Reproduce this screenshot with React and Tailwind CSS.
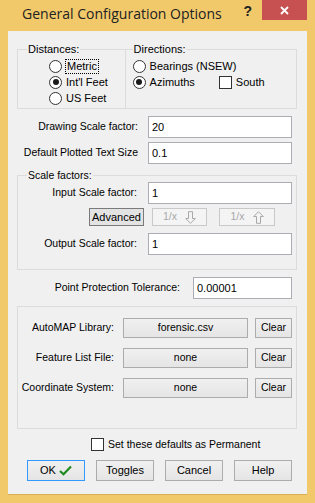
import React from "react";

function Radio({ checked, label, focus }) {
  return (
    <div className="flex items-center h-[16px]">
      <span className="w-[13px] h-[13px] rounded-full border border-[#333333] bg-white flex items-center justify-center shrink-0">
        {checked ? <span className="w-[6px] h-[6px] rounded-full bg-[#1a1a1a]" /> : null}
      </span>
      {focus ? (
        <span className="ml-[3px] px-[1px] leading-[13px] border border-dotted border-black">{label}</span>
      ) : (
        <span className="ml-[4px] leading-[13px]">{label}</span>
      )}
    </div>
  );
}

function Box() {
  return <span className="w-[13px] h-[13px] border border-[#333333] bg-white shrink-0" />;
}

function TextBox({ value, w }) {
  return (
    <div className={`h-[22px] border border-[#ABADB3] bg-white pl-[3px] flex items-center text-[11px] ${w}`}>{value}</div>
  );
}

function Btn({ children, w, h = "h-[20px]", extra = "border-[#ACACAC]" }) {
  return (
    <div className={`${w} ${h} border ${extra} bg-linear-to-b from-[#F0F0F0] to-[#E5E5E5] flex items-center justify-center whitespace-nowrap`}>
      {children}
    </div>
  );
}

function Arrow({ up }) {
  return (
    <svg width="11" height="13" viewBox="0 0 11 13" className="ml-[8px]">
      {up ? (
        <path d="M5.5 0.7 L10.3 5.5 L7.5 5.5 L7.5 12.3 L3.5 12.3 L3.5 5.5 L0.7 5.5 Z" fill="none" stroke="#A8A8A8" strokeWidth="1" />
      ) : (
        <path d="M5.5 12.3 L10.3 7.5 L7.5 7.5 L7.5 0.7 L3.5 0.7 L3.5 7.5 L0.7 7.5 Z" fill="none" stroke="#A8A8A8" strokeWidth="1" />
      )}
    </svg>
  );
}

export default function App() {
  return (
    <div className="w-[315px] h-[503px] bg-[#F1C96B] flex flex-col font-['Liberation_Sans',Arial,sans-serif] text-[10.5px] text-black">
      {/* Title bar */}
      <div className="h-[31px] flex items-start shrink-0">
        <div className="pl-[22px] pt-[4px] text-[14px] leading-[20px] text-[#222222] font-['Open_Sans',sans-serif]">
          General Configuration Options
        </div>
        <div className="flex-1" />
        <div className="pt-[2px] mr-[10px] text-[14px] font-bold leading-[18px] text-[#222222] font-['Liberation_Sans',Arial,sans-serif]">?</div>
        <div className="w-[45px] h-[20px] bg-[#C75050] mr-[8px] flex items-center justify-center">
          <svg width="9" height="9" viewBox="0 0 9 9">
            <path d="M1 1 L8 8 M8 1 L1 8" stroke="white" strokeWidth="1.8" />
          </svg>
        </div>
      </div>

      {/* Client area */}
      <div className="mx-[8px] h-[464px] bg-[#F0F0F0] pl-[9px] pr-[10px] flex flex-col shrink-0 border-b border-[#D9AE55] whitespace-nowrap">
        {/* Distances / Directions */}
        <div className="mt-[12px] flex">
          <fieldset className="w-[109px] h-[66px] border border-[#DCDCDC] px-0 pb-0">
            <legend className="ml-[9px] px-[1px] leading-[13px] text-[11px]">Distances:</legend>
            <div className="pl-[31px] pt-[2px] flex flex-col text-[11px]">
              <Radio label="Metric" focus />
              <Radio label="Int'l Feet" checked />
              <Radio label="US Feet" />
            </div>
          </fieldset>
          <fieldset className="w-[173px] h-[66px] -ml-px border border-[#DCDCDC] px-0 pb-0">
            <legend className="ml-[7px] px-[1px] leading-[13px] text-[11px]">Directions:</legend>
            <div className="pl-[7px] pt-[2px] flex flex-col text-[11px]">
              <Radio label="Bearings (NSEW)" />
              <div className="flex items-center">
                <Radio label="Azimuths" checked />
                <div className="ml-[24px] flex items-center">
                  <Box />
                  <span className="ml-[4px] leading-[13px]">South</span>
                </div>
              </div>
            </div>
          </fieldset>
        </div>

        {/* Drawing scale */}
        <div className="mt-[7px] flex items-center">
          <div className="w-[121px] text-right">Drawing Scale factor:</div>
          <div className="ml-[10px]"><TextBox value="20" w="w-[144px]" /></div>
        </div>
        <div className="mt-[4px] flex items-center">
          <div className="w-[121px] text-right">Default Plotted Text Size</div>
          <div className="ml-[10px]"><TextBox value="0.1" w="w-[144px]" /></div>
        </div>

        {/* Scale factors */}
        <fieldset className="mt-[5px] h-[101px] border border-[#DCDCDC] px-0 pb-0">
          <legend className="ml-[9px] px-[1px] leading-[13px]">Scale factors:</legend>
          <div className="flex items-center">
            <div className="w-[119px] text-right">Input Scale factor:</div>
            <div className="ml-[11px]"><TextBox value="1" w="w-[144px]" /></div>
          </div>
          <div className="mt-[4px] flex items-center">
            <div className="ml-[71px] w-[55px] h-[18px] border border-[#7A7A7A] bg-[#E3E3E3] flex items-center justify-center text-[11px]">Advanced</div>
            <div className="ml-[8px] w-[55px] h-[18px] border border-[#C9C9C9] bg-[#F4F4F4] flex items-center justify-center text-[#A8A8A8]">
              <span>1/x</span>
              <Arrow />
            </div>
            <div className="ml-[12px] w-[56px] h-[18px] border border-[#C9C9C9] bg-[#F4F4F4] flex items-center justify-center text-[#A8A8A8]">
              <span>1/x</span>
              <Arrow up />
            </div>
          </div>
          <div className="mt-[7px] flex items-center">
            <div className="w-[119px] text-right">Output Scale factor:</div>
            <div className="ml-[11px]"><TextBox value="1" w="w-[144px]" /></div>
          </div>
        </fieldset>

        {/* Point protection */}
        <div className="mt-[7px] flex items-center">
          <div className="w-[163px] text-right">Point Protection Tolerance:</div>
          <div className="ml-[13px]"><TextBox value="0.00001" w="w-[99px]" /></div>
        </div>

        {/* Files */}
        <div className="mt-[7px] h-[123px] border border-[#DCDCDC] flex flex-col">
          {[
            ["AutoMAP Library:", "forensic.csv", "mt-[11px]"],
            ["Feature List File:", "none", "mt-[10px]"],
            ["Coordinate System:", "none", "mt-[10px]"],
          ].map(([l, v, m]) => (
            <div key={l} className={`${m} flex items-center`}>
              <div className="w-[96px] text-right">{l}</div>
              <div className="ml-[9px]"><Btn w="w-[125px]">{v}</Btn></div>
              <div className="ml-[7px]"><Btn w="w-[37px]">Clear</Btn></div>
            </div>
          ))}
        </div>

        {/* Permanent */}
        <div className="mt-[9px] flex items-center">
          <div className="ml-[74px] flex"><Box /></div>
          <span className="ml-[4px] leading-[13px]">Set these defaults as Permanent</span>
        </div>

        {/* Buttons */}
        <div className="mt-[9px] ml-[10px] flex gap-[11px] text-[11px]">
          <Btn w="w-[58px]" h="h-[21px]" extra="border-[#3399FF]">
            <span>OK</span>
            <svg width="13" height="11" viewBox="0 0 13 11" className="ml-[3px]">
              <path d="M1 6 L4.5 9.2 L12 1.5" fill="none" stroke="#1E8C1E" strokeWidth="2.2" />
            </svg>
          </Btn>
          <Btn w="w-[58px]" h="h-[21px]">Toggles</Btn>
          <Btn w="w-[58px]" h="h-[21px]">Cancel</Btn>
          <Btn w="w-[58px]" h="h-[21px]">Help</Btn>
        </div>
      </div>
    </div>
  );
}
